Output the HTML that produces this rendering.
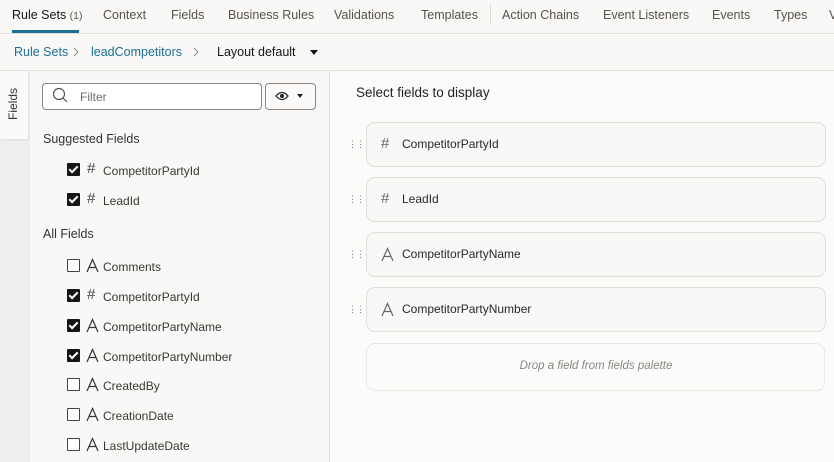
<!DOCTYPE html><html><head><style>
body{margin:0;width:834px;height:462px;overflow:hidden;background:#fbfaf9;font-family:"Liberation Sans",sans-serif;color:#161513;position:relative}
.a{position:absolute;white-space:nowrap}
.tab{top:8px;font-size:12.5px;color:#55524e}
.cb{position:absolute;width:11px;height:11px;border:1px solid #444;border-radius:1px;background:#fff}
.cb.on{background:#161513;border-color:#161513}
.cb.on:after{content:"";position:absolute;left:3px;top:0px;width:3px;height:7px;border:solid #fff;border-width:0 2px 2px 0;transform:rotate(45deg)}
.fl{font-size:12px;color:#3a3835}
.ic{font-size:15px;color:#444;position:absolute}
.av{position:absolute}
.card{position:absolute;left:366px;width:458px;height:43px;border:1.5px solid #e0dedb;border-radius:9px;background:#f9f8f6}
.card span{position:absolute;top:14px;font-size:12px;color:#2a2826}
.drag{position:absolute;left:348px;font-size:9px;color:#777;letter-spacing:-1px}
</style></head><body>
<svg width="0" height="0" style="position:absolute"><defs><path id="A" d="M1 14L6.5 1.5L12 14M3.4 9.5H9.6" fill="none" stroke-width="1.2"/></defs></svg>
<div class="a" style="left:0;top:0;width:834px;height:33px;border-bottom:1px solid #e3e1de;background:#f9f8f6"></div>
<div class="a tab" style="left:12px;color:#161513">Rule Sets <span style="font-size:10.5px;color:#55524e">(1)</span></div>
<div class="a" style="left:12px;top:30px;width:67px;height:3px;background:#1e7193"></div>
<div class="a tab" style="left:103px">Context</div>
<div class="a tab" style="left:171px">Fields</div>
<div class="a tab" style="left:228px">Business Rules</div>
<div class="a tab" style="left:334px">Validations</div>
<div class="a tab" style="left:421px">Templates</div>
<div class="a" style="left:490px;top:4px;width:1px;height:20px;background:#dcdad7"></div>
<div class="a tab" style="left:502px">Action Chains</div>
<div class="a tab" style="left:603px">Event Listeners</div>
<div class="a tab" style="left:712px">Events</div>
<div class="a tab" style="left:774px">Types</div>
<div class="a tab" style="left:829px">V</div>
<div class="a" style="left:0;top:34px;width:834px;height:36px;border-bottom:1px solid #e3e1de;background:#f9f8f6"></div>
<div class="a" style="left:14px;top:45px;font-size:12.5px;color:#1c6f94">Rule Sets</div>
<svg class="a" style="left:72px;top:47px" width="8" height="10"><path d="M2 1L6 5L2 9" fill="none" stroke="#888" stroke-width="1"/></svg>
<div class="a" style="left:91px;top:45px;font-size:12.5px;color:#1c6f94">leadCompetitors</div>
<svg class="a" style="left:192px;top:47px" width="8" height="10"><path d="M2 1L6 5L2 9" fill="none" stroke="#888" stroke-width="1"/></svg>
<div class="a" style="left:217px;top:45px;font-size:12.5px">Layout default</div>
<div class="a" style="left:310px;top:50px;border:4px solid transparent;border-top:5px solid #161513"></div>
<div class="a" style="left:0;top:71px;width:30px;height:391px;background:#efeeec;border-right:1px solid #e3e1de"></div>
<div class="a" style="left:0;top:71px;width:28px;height:68px;background:#fbfaf9;box-shadow:1px 1px 2px rgba(0,0,0,.08)"></div>
<div class="a" style="left:6px;top:120px;font-size:12px;transform:rotate(-90deg);transform-origin:0 0;color:#333">Fields</div>
<div class="a" style="left:30px;top:71px;width:299px;height:391px;background:#f9f8f6;border-right:1px solid #e3e1de"></div>
<div class="a" style="left:330px;top:71px;width:504px;height:391px;background:#fbfbfa"></div>
<div class="a" style="left:42px;top:83px;width:218px;height:25px;border:1px solid #8a8784;border-radius:4px;background:#fff"></div>
<svg class="a" style="left:52px;top:87px" width="16" height="16"><circle cx="7" cy="7" r="5.5" fill="none" stroke="#555" stroke-width="1.2"/><line x1="11" y1="11" x2="15" y2="15" stroke="#555" stroke-width="1.2"/></svg>
<div class="a" style="left:80px;top:90px;font-size:12px;color:#6f6c69">Filter</div>
<div class="a" style="left:265px;top:83px;width:49px;height:25px;border:1px solid #8a8784;border-radius:4px;background:#fbfaf9"></div>
<svg class="a" style="left:275px;top:90px" width="14" height="12"><path d="M1 6Q7 -1 13 6Q7 13 1 6Z" fill="none" stroke="#222" stroke-width="1.3"/><circle cx="7" cy="6" r="2" fill="#222"/></svg>
<div class="a" style="left:297px;top:94px;border:3.5px solid transparent;border-top:4px solid #222"></div>
<div class="a" style="left:43px;top:132px;font-size:12.5px;color:#333">Suggested Fields</div>
<div class="cb on" style="left:67px;top:163px"></div><div class="ic" style="left:87px;top:160px">#</div><div class="a fl" style="left:103px;top:164px">CompetitorPartyId</div>
<div class="cb on" style="left:67px;top:193px"></div><div class="ic" style="left:87px;top:190px">#</div><div class="a fl" style="left:103px;top:194px">LeadId</div>
<div class="a" style="left:43px;top:227px;font-size:12.5px;color:#333">All Fields</div>
<div class="cb" style="left:67px;top:259px"></div><svg class="av" style="left:86px;top:258px" width="13" height="15" stroke="#333"><use href="#A"/></svg><div class="a fl" style="left:103px;top:260px">Comments</div>
<div class="cb on" style="left:67px;top:289px"></div><div class="ic" style="left:87px;top:286px">#</div><div class="a fl" style="left:103px;top:290px">CompetitorPartyId</div>
<div class="cb on" style="left:67px;top:319px"></div><svg class="av" style="left:86px;top:318px" width="13" height="15" stroke="#333"><use href="#A"/></svg><div class="a fl" style="left:103px;top:320px">CompetitorPartyName</div>
<div class="cb on" style="left:67px;top:349px"></div><svg class="av" style="left:86px;top:348px" width="13" height="15" stroke="#333"><use href="#A"/></svg><div class="a fl" style="left:103px;top:350px">CompetitorPartyNumber</div>
<div class="cb" style="left:67px;top:378px"></div><svg class="av" style="left:86px;top:377px" width="13" height="15" stroke="#333"><use href="#A"/></svg><div class="a fl" style="left:103px;top:379px">CreatedBy</div>
<div class="cb" style="left:67px;top:408px"></div><svg class="av" style="left:86px;top:407px" width="13" height="15" stroke="#333"><use href="#A"/></svg><div class="a fl" style="left:103px;top:409px">CreationDate</div>
<div class="cb" style="left:67px;top:438px"></div><svg class="av" style="left:86px;top:437px" width="13" height="15" stroke="#333"><use href="#A"/></svg><div class="a fl" style="left:103px;top:439px">LastUpdateDate</div>
<div class="a" style="left:356px;top:85px;font-size:13.5px;color:#222">Select fields to display</div>
<div class="drag" style="top:139px">⋮⋮⋮</div>
<div class="card" style="top:122px"><div class="ic" style="left:14px;top:12px;color:#666">#</div><span style="left:35px">CompetitorPartyId</span></div>
<div class="drag" style="top:194px">⋮⋮⋮</div>
<div class="card" style="top:177px"><div class="ic" style="left:14px;top:12px;color:#666">#</div><span style="left:35px">LeadId</span></div>
<div class="drag" style="top:249px">⋮⋮⋮</div>
<div class="card" style="top:232px"><svg class="av" style="left:14px;top:14px" width="13" height="15" stroke="#666"><use href="#A"/></svg><span style="left:35px">CompetitorPartyName</span></div>
<div class="drag" style="top:304px">⋮⋮⋮</div>
<div class="card" style="top:287px"><svg class="av" style="left:14px;top:14px" width="13" height="15" stroke="#666"><use href="#A"/></svg><span style="left:35px">CompetitorPartyNumber</span></div>
<div class="a" style="left:366px;top:343px;width:457px;height:46px;border:1.5px dotted #d6d4d1;border-radius:9px"></div>
<div class="a" style="left:366px;top:360px;width:460px;text-align:center;font-size:11.5px;font-style:italic;color:#8a8784">Drop a field from fields palette</div>
</body></html>
